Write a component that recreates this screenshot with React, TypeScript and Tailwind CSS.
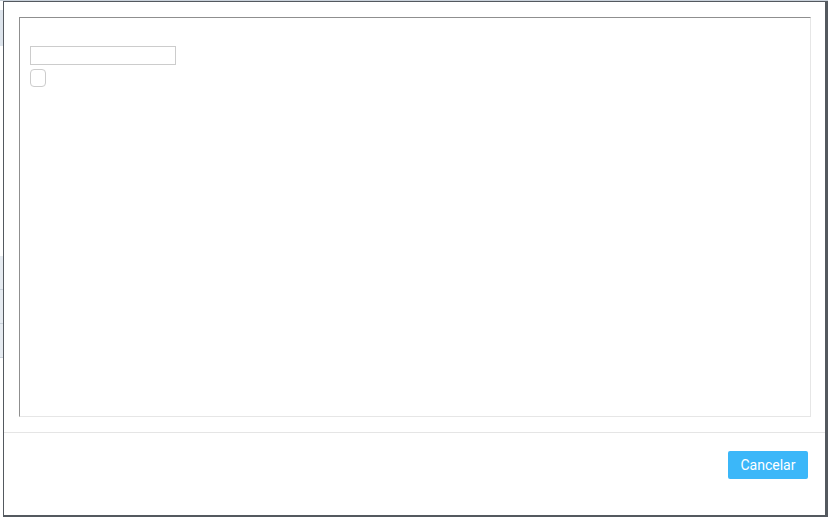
export default function App() {
  return (
    <div className="flex h-[517px] w-[828px] flex-col overflow-hidden bg-[#c9d1da] font-['Roboto',sans-serif]">
      <div className="flex flex-1 pt-[1px]">
        <div className="flex w-[3px] flex-col bg-white">
          <div className="h-[9px]" />
          <div className="h-[36px] bg-[#dde4ec]" />
          <div className="h-[210px]" />
          <div className="h-[34px] border-b border-[#c9d1da] bg-[#e6ebf1]" />
          <div className="h-[34px] border-b border-[#c9d1da] bg-[#e6ebf1]" />
          <div className="h-[34px] border-b border-[#c9d1da] bg-[#e6ebf1]" />
          <div className="flex-1" />
        </div>
        <div className="flex flex-1 flex-col border-t border-r-[3px] border-b-[2px] border-l border-[#54595f] bg-white">
          <div className="pt-[15px] pr-[14px] pb-[15px] pl-[15px]">
            <div className="h-[400px] border border-t-[#8f8f8f] border-r-[#e6e6e6] border-b-[#e6e6e6] border-l-[#8f8f8f] bg-white">
              <div className="flex flex-col gap-[4px] pt-[28px] pl-[10px]">
                <input type="text" className="h-[19px] w-[146px] border border-[#cccccc] bg-white outline-none" />
                <div className="h-[18px] w-[16px] rounded-[4px] border border-[#cccccc] bg-white" />
              </div>
            </div>
          </div>
          <div className="flex flex-1 justify-end border-t border-[#e5e5e5] pt-[18px] pr-[17px]">
            <button
              type="button"
              className="h-[28px] w-[80px] rounded-[2px] bg-[#3bb7f9] text-[14px] font-normal text-white"
            >
              Cancelar
            </button>
          </div>
        </div>
      </div>
    </div>
  );
}
